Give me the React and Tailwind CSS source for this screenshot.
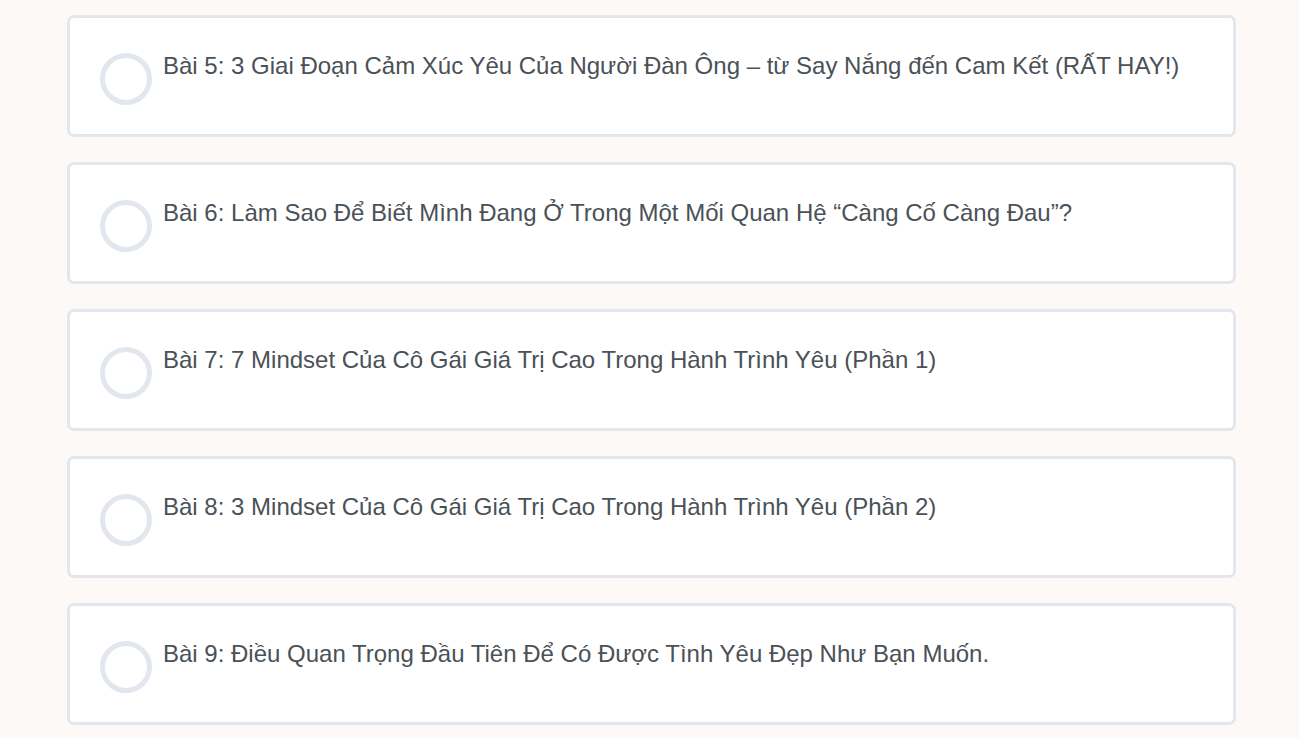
const lessons = [
  "Bài 5: 3 Giai Đoạn Cảm Xúc Yêu Của Người Đàn Ông – từ Say Nắng đến Cam Kết (RẤT HAY!)",
  "Bài 6: Làm Sao Để Biết Mình Đang Ở Trong Một Mối Quan Hệ “Càng Cố Càng Đau”?",
  "Bài 7: 7 Mindset Của Cô Gái Giá Trị Cao Trong Hành Trình Yêu (Phần 1)",
  "Bài 8: 3 Mindset Của Cô Gái Giá Trị Cao Trong Hành Trình Yêu (Phần 2)",
  "Bài 9: Điều Quan Trọng Đầu Tiên Để Có Được Tình Yêu Đẹp Như Bạn Muốn.",
];

const LessonCard = ({ title }) => (
  <div className="flex items-start h-[122px] bg-white border-[3px] border-[#e2e6ed] rounded-[7px] px-[30px]">
    <div className="shrink-0 w-[52px] h-[52px] mt-[35px] rounded-full border-[5px] border-[#e2e6ed]"></div>
    <div className="ml-[11px] pt-[33px] text-[24px] leading-[30px] text-[#4a5157]">
      {title}
    </div>
  </div>
);

export default function App() {
  return (
    <div
      className="min-h-[738px] bg-[#fdf9f6] pt-[15px] pb-[12px]"
      style={{ fontFamily: '"Liberation Sans", Arial, sans-serif' }}
    >
      <div className="ml-[67px] w-[1169px] flex flex-col gap-[25px]">
        {lessons.map((t, i) => (
          <LessonCard key={i} title={t} />
        ))}
      </div>
    </div>
  );
}
